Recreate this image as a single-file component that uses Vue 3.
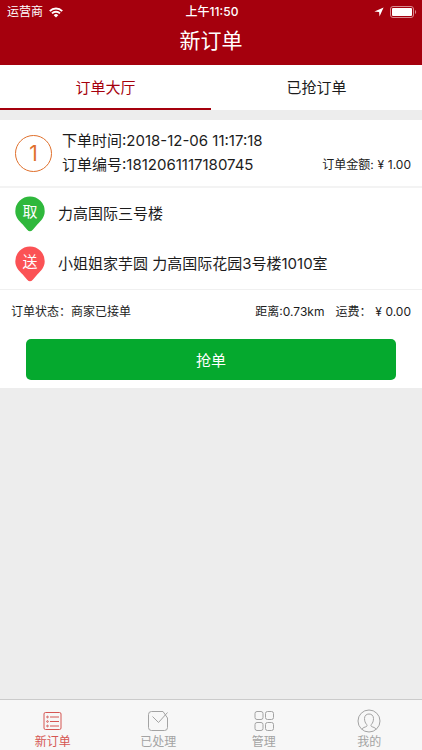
<script setup>
import { ref } from 'vue'

const activeTab = ref(0)
const tabs = ['订单大厅', '已抢订单']

const order = {
  index: 1,
  time: '2018-12-06 11:17:18',
  number: '1812061117180745',
  amount: '1.00',
  pickup: '力高国际三号楼',
  dropoff: '小姐姐家芋圆 力高国际花园3号楼1010室',
  status: '商家已接单',
  distance: '0.73km',
  fee: '0.00',
}
</script>

<template>
  <div class="page">
    <header class="header">
      <div class="status-bar">
        <div class="carrier">
          <span>运营商</span>
          <svg class="wifi" viewBox="0 0 14 11" aria-hidden="true">
            <path d="M0.8 4.1a8.8 8.8 0 0 1 12.4 0" />
            <path d="M3 6.4a5.7 5.7 0 0 1 8 0" />
            <path class="solid" d="M7 10.6 4.7 8.2a3.3 3.3 0 0 1 4.6 0z" />
          </svg>
        </div>
        <div class="clock">上午11:50</div>
        <div class="indicators">
          <svg class="location" viewBox="0 0 10 10" aria-hidden="true">
            <path d="M9.6 0.4 5.5 9.6 5.1 4.9 0.4 4.5z" />
          </svg>
          <svg class="battery" viewBox="0 0 27 12" aria-hidden="true">
            <rect class="shell" x="0.5" y="0.5" width="23" height="11" rx="2.5" />
            <rect class="level" x="2" y="2" width="20" height="8" rx="1" />
            <path class="cap" d="M25 4c1.5.5 1.5 3.5 0 4z" />
          </svg>
        </div>
      </div>
      <h1 class="title">新订单</h1>
    </header>

    <nav class="tabs">
      <button
        v-for="(tab, i) in tabs"
        :key="tab"
        type="button"
        class="tab"
        :class="{ active: activeTab === i }"
        @click="activeTab = i"
      >{{ tab }}</button>
    </nav>

    <main class="content">
      <article class="card">
        <div class="summary">
          <div class="index">{{ order.index }}</div>
          <div class="details">
            <div>下单时间:{{ order.time }}</div>
            <div class="number-line">
              <span>订单编号:{{ order.number }}</span>
              <span class="small">订单金额:<span class="yen">¥</span>{{ order.amount }}</span>
            </div>
          </div>
        </div>

        <div class="places">
          <div class="place">
            <svg class="pin pickup" viewBox="0 0 30 36" aria-hidden="true">
              <path d="M15 0.5a14.7 14.7 0 0 1 14.7 14.7c0 6-3.7 9.5-7.2 13l-4.7 5.5q-2.8 3-5.6 0l-4.7-5.5C4 24.7.3 21.2.3 15.2A14.7 14.7 0 0 1 15 .5z" />
              <text x="15" y="21">取</text>
            </svg>
            <span>{{ order.pickup }}</span>
          </div>
          <div class="place">
            <svg class="pin dropoff" viewBox="0 0 30 36" aria-hidden="true">
              <path d="M15 0.5a14.7 14.7 0 0 1 14.7 14.7c0 6-3.7 9.5-7.2 13l-4.7 5.5q-2.8 3-5.6 0l-4.7-5.5C4 24.7.3 21.2.3 15.2A14.7 14.7 0 0 1 15 .5z" />
              <text x="15" y="21">送</text>
            </svg>
            <span>{{ order.dropoff }}</span>
          </div>
        </div>

        <div class="state small">
          <span class="grow">订单状态：{{ order.status }}</span>
          <span>距离:{{ order.distance }}</span>
          <span>运费：<span class="yen">¥</span>{{ order.fee }}</span>
        </div>

        <div class="action">
          <button type="button" class="grab">抢单</button>
        </div>
      </article>
    </main>

    <nav class="tabbar">
      <a href="#new" class="item current">
        <svg viewBox="0 0 24 24" aria-hidden="true">
          <rect x="3" y="3.5" width="17" height="17" rx="1.5" />
          <path d="M9 8h9M9 12.500h9M9 17h9" />
          <circle cx="6.5" cy="8" r="0.8" /><circle cx="6.5" cy="12.5" r="0.8" /><circle cx="6.5" cy="17" r="0.8" />
        </svg>
        <span>新订单</span>
      </a>
      <a href="#done" class="item">
        <svg viewBox="0 0 24 24" aria-hidden="true">
          <path d="M17 2.5H5.500a3 3 0 0 0-3 3v13a3 3 0 0 0 3 3h13a3 3 0 0 0 3-3V9zM6.5 7.5l6 6L21.500 3.500" />
        </svg>
        <span>已处理</span>
      </a>
      <a href="#manage" class="item">
        <svg viewBox="0 0 24 24" aria-hidden="true">
          <rect x="3" y="2.5" width="8" height="8" rx="2" />
          <rect x="13.5" y="2.5" width="8" height="8" rx="2" />
          <rect x="3" y="13.5" width="8" height="8" rx="2" />
          <rect x="13.5" y="13.5" width="8" height="8" rx="2" />
        </svg>
        <span>管理</span>
      </a>
      <a href="#me" class="item">
        <svg viewBox="0 0 24 24" aria-hidden="true">
          <circle cx="12" cy="12" r="11" />
          <path d="M5 20.4c.5-2 3-2.1 4.500-2.900.8-.5.6-1.500 0-2.200C8.300 14 7.500 12 7.500 9.500 7.500 6.500 9.500 5 12 5s4.500 1.500 4.500 4.500c0 2.500-.8 4.500-2 5.800-.6.700-.8 1.700 0 2.200 1.500.8 4 .9 4.500 2.900" />
        </svg>
        <span>我的</span>
      </a>
    </nav>
  </div>
</template>

<style>
body {
  margin: 0;
  background: #ededed;
}
</style>

<style scoped>
.page {
  display: flex;
  flex-direction: column;
  min-height: 100vh;
  background: #ededed;
  color: #1c1c1c;
  font-family: Inter, "Noto Sans CJK SC", sans-serif;
  font-size: 15px;
  line-height: 24px;
}
button {
  border: 0;
  padding: 0;
  font: inherit;
  cursor: pointer;
}
.header {
  background: #a5000d;
  color: #fff;
  padding-bottom: 3px;
}
.status-bar {
  display: grid;
  grid-template-columns: 1fr auto 1fr;
  align-items: center;
  height: 20px;
  padding: 0 5px 0 7px;
  font-size: 12px;
}
.carrier,
.indicators {
  display: flex;
  align-items: center;
  gap: 6px;
}
.indicators {
  justify-content: flex-end;
}
.clock {
  font-weight: 500;
}
.wifi {
  width: 14px;
  height: 11px;
  fill: none;
  stroke: #fff;
  stroke-width: 2;
}
.wifi .solid {
  fill: #fff;
  stroke: none;
}
.location {
  width: 10px;
  height: 10px;
  fill: #fff;
}
.battery {
  width: 27px;
  height: 12px;
}
.shell {
  fill: none;
  stroke: #d98a90;
}
.level {
  fill: #fff;
}
.cap {
  fill: #d98a90;
}
.title {
  margin: 0;
  font-size: 21px;
  font-weight: 400;
  line-height: 42px;
  text-align: center;
}
.tabs {
  display: flex;
  background: #fff;
}
.tab {
  flex: 1;
  height: 45px;
  padding-top: 2px;
  border-bottom: 2px solid transparent;
  background: none;
  color: #1c1c1c;
}
.tab.active {
  color: #a5000d;
  border-bottom-color: #a5000d;
}
.content {
  flex: 1;
  padding-top: 10px;
}
.card {
  background: #fff;
}
.summary {
  display: flex;
  align-items: center;
  gap: 10px;
  padding: 9px 11px 9px 15px;
  border-bottom: 2px solid #f3f3f3;
}
.index {
  box-sizing: border-box;
  width: 37px;
  height: 37px;
  border: 1px solid #e0702c;
  border-radius: 50%;
  color: #e0702c;
  font-size: 21px;
  line-height: 36px;
  text-align: center;
}
.details {
  flex: 1;
}
.number-line {
  display: flex;
  justify-content: space-between;
  align-items: center;
}
.small {
  font-size: 12px;
}
.yen {
  display: inline-block;
  width: 14px;
  text-align: center;
}
.places {
  display: flex;
  flex-direction: column;
  gap: 14px;
  padding: 8px 15px 7px;
  border-bottom: 1px solid #f0f0f0;
}
.place {
  display: flex;
  align-items: center;
  gap: 13px;
}
.pin {
  width: 30px;
  height: 36px;
}
.pin text {
  fill: #fff;
  font-size: 15px;
  text-anchor: middle;
}
.pickup {
  fill: #2fb83c;
}
.dropoff {
  fill: #fb5255;
}
.state {
  display: flex;
  gap: 11px;
  padding: 10px 11px 8px;
}
.grow {
  flex: 1;
}
.action {
  padding: 7px 26px 8px;
}
.grab {
  display: block;
  width: 100%;
  height: 41px;
  padding-top: 2px;
  border-radius: 5px;
  background: #05a92e;
  color: #fff;
}
.tabbar {
  display: flex;
  background: #f7f7f7;
  border-top: 1px solid #cbcbcb;
}
.item {
  flex: 1;
  display: flex;
  flex-direction: column;
  align-items: center;
  gap: 1px;
  padding: 9px 0 0;
  color: #a3a3a3;
  font-size: 12px;
  line-height: 16px;
  text-decoration: none;
}
.item svg {
  width: 24px;
  height: 24px;
  fill: none;
  stroke: currentColor;
  stroke-width: 1;
}
.item.current {
  color: #d55653;
}
</style>
